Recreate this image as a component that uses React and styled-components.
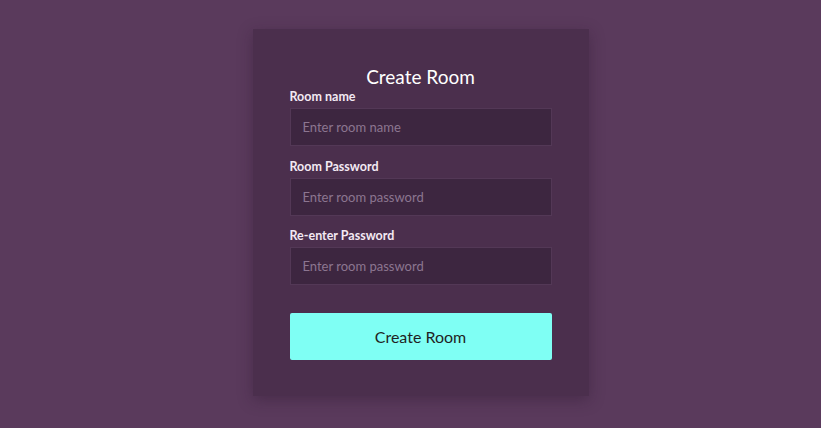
import React from "react";
import styled, { createGlobalStyle } from "styled-components";

const GlobalStyle = createGlobalStyle`
  html, body {
    margin: 0;
    padding: 0;
    background: #5a3a5c;
    font-family: Lato, "Noto Sans", sans-serif;
  }
`;

const Page = styled.div`
  width: 821px;
  height: 428px;
  display: flex;
  justify-content: center;
  align-items: flex-start;
  padding: 29px 0 0 20px;
  box-sizing: border-box;
`;

const Card = styled.form`
  width: 336px;
  box-sizing: border-box;
  padding: 36px 37px;
  background: #4b2f4d;
  box-shadow: 0 4px 14px rgba(40, 20, 42, 0.35);
  display: flex;
  flex-direction: column;
`;

const Title = styled.h2`
  margin: 0;
  font-size: 19px;
  line-height: 24px;
  font-weight: 400;
  color: #ffffff;
  text-align: center;
`;

const Field = styled.div`
  display: flex;
  flex-direction: column;
  gap: 3px;
  margin-bottom: ${(p) => (p.last ? "28px" : "12.5px")};
`;

const Label = styled.label`
  font-size: 12.5px;
  line-height: 16px;
  font-weight: 700;
  color: #f3e9f3;
`;

const Input = styled.input`
  height: 38px;
  box-sizing: border-box;
  padding: 0 12px;
  background: #3d2640;
  border: 1px solid #533856;
  color: #fff;
  font-family: inherit;
  font-size: 13px;
  outline: none;

  &::placeholder {
    color: #8c7690;
  }
`;

const Button = styled.button`
  height: 47px;
  border: none;
  border-radius: 2px;
  background: #7ffff4;
  color: #1f1f24;
  font-family: inherit;
  font-size: 16px;
  cursor: pointer;
`;

const fields = [
  { label: "Room name", placeholder: "Enter room name", type: "text" },
  { label: "Room Password", placeholder: "Enter room password", type: "password" },
  { label: "Re-enter Password", placeholder: "Enter room password", type: "password" },
];

export default function App() {
  return (
    <>
      <GlobalStyle />
      <Page>
        <Card onSubmit={(e) => e.preventDefault()}>
          <Title>Create Room</Title>
          {fields.map((f, i) => (
            <Field key={f.label} last={i === fields.length - 1}>
              <Label>{f.label}</Label>
              <Input type={f.type} placeholder={f.placeholder} />
            </Field>
          ))}
          <Button type="submit">Create Room</Button>
        </Card>
      </Page>
    </>
  );
}
